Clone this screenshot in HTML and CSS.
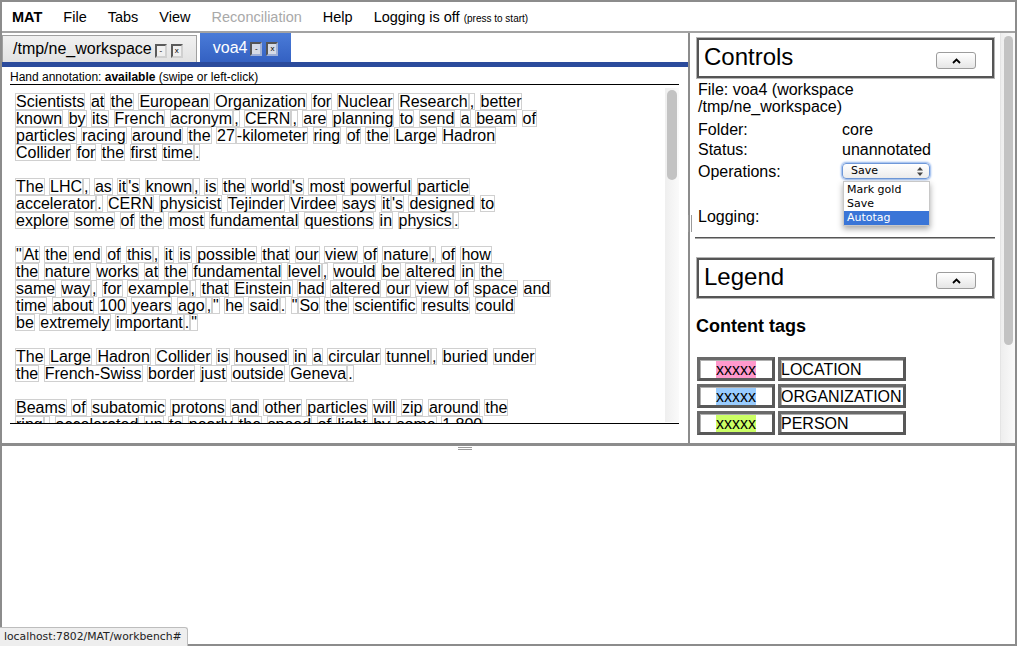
FILE: index.html
```html
<!DOCTYPE html>
<html>
<head>
<meta charset="utf-8">
<title>MAT Workbench</title>
<link rel="stylesheet" href="styles.css">
</head>
<body>
<div class="app">
  <div class="menubar">
    <span class="menu brand">MAT</span>
    <span class="menu">File</span>
    <span class="menu">Tabs</span>
    <span class="menu">View</span>
    <span class="menu disabled">Reconciliation</span>
    <span class="menu">Help</span>
    <span class="menu">Logging is off <small>(press to start)</small></span>
  </div>
  <div class="main">
    <div class="left">
      <div class="tabbar">
        <div class="tab">/tmp/ne_workspace<span class="tbtns"><span class="tbtn">-</span><span class="tbtn">x</span></span></div>
        <div class="tab active">voa4<span class="tbtns"><span class="tbtn">-</span><span class="tbtn">x</span></span></div>
      </div>
      <div class="tabline"></div>
      <div class="doc">
        <div class="annot">Hand annotation: <b>available</b> (swipe or left-click)</div>
        <div class="textwrap">
          <div class="text">
<span class="t">Scientists</span> <span class="t">at</span> <span class="t">the</span> <span class="t">European</span> <span class="t">Organization</span> <span class="t">for</span> <span class="t">Nuclear</span> <span class="t">Research</span><span class="t">,</span> <span class="t">better</span><br>
<span class="t">known</span> <span class="t">by</span> <span class="t">its</span> <span class="t">French</span> <span class="t">acronym</span><span class="t">,</span> <span class="t">CERN</span><span class="t">,</span> <span class="t">are</span> <span class="t">planning</span> <span class="t">to</span> <span class="t">send</span> <span class="t">a</span> <span class="t">beam</span> <span class="t">of</span><br>
<span class="t">particles</span> <span class="t">racing</span> <span class="t">around</span> <span class="t">the</span> <span class="t">27</span><span class="t">-kilometer</span> <span class="t">ring</span> <span class="t">of</span> <span class="t">the</span> <span class="t">Large</span> <span class="t">Hadron</span><br>
<span class="t">Collider</span> <span class="t">for</span> <span class="t">the</span> <span class="t">first</span> <span class="t">time</span><span class="t">.</span><br>
<br>
<span class="t">The</span> <span class="t">LHC</span><span class="t">,</span> <span class="t">as</span> <span class="t">it</span><span class="t">'s</span> <span class="t">known</span><span class="t">,</span> <span class="t">is</span> <span class="t">the</span> <span class="t">world</span><span class="t">'s</span> <span class="t">most</span> <span class="t">powerful</span> <span class="t">particle</span><br>
<span class="t">accelerator</span><span class="t">.</span> <span class="t">CERN</span> <span class="t">physicist</span> <span class="t">Tejinder</span> <span class="t">Virdee</span> <span class="t">says</span> <span class="t">it</span><span class="t">'s</span> <span class="t">designed</span> <span class="t">to</span><br>
<span class="t">explore</span> <span class="t">some</span> <span class="t">of</span> <span class="t">the</span> <span class="t">most</span> <span class="t">fundamental</span> <span class="t">questions</span> <span class="t">in</span> <span class="t">physics</span><span class="t">.</span><br>
<br>
<span class="t">"</span><span class="t">At</span> <span class="t">the</span> <span class="t">end</span> <span class="t">of</span> <span class="t">this</span><span class="t">,</span> <span class="t">it</span> <span class="t">is</span> <span class="t">possible</span> <span class="t">that</span> <span class="t">our</span> <span class="t">view</span> <span class="t">of</span> <span class="t">nature</span><span class="t">,</span> <span class="t">of</span> <span class="t">how</span><br>
<span class="t">the</span> <span class="t">nature</span> <span class="t">works</span> <span class="t">at</span> <span class="t">the</span> <span class="t">fundamental</span> <span class="t">level</span><span class="t">,</span> <span class="t">would</span> <span class="t">be</span> <span class="t">altered</span> <span class="t">in</span> <span class="t">the</span><br>
<span class="t">same</span> <span class="t">way</span><span class="t">,</span> <span class="t">for</span> <span class="t">example</span><span class="t">,</span> <span class="t">that</span> <span class="t">Einstein</span> <span class="t">had</span> <span class="t">altered</span> <span class="t">our</span> <span class="t">view</span> <span class="t">of</span> <span class="t">space</span> <span class="t">and</span><br>
<span class="t">time</span> <span class="t">about</span> <span class="t">100</span> <span class="t">years</span> <span class="t">ago</span><span class="t">,</span><span class="t">"</span> <span class="t">he</span> <span class="t">said</span><span class="t">.</span> <span class="t">"</span><span class="t">So</span> <span class="t">the</span> <span class="t">scientific</span> <span class="t">results</span> <span class="t">could</span><br>
<span class="t">be</span> <span class="t">extremely</span> <span class="t">important</span><span class="t">.</span><span class="t">"</span><br>
<br>
<span class="t">The</span> <span class="t">Large</span> <span class="t">Hadron</span> <span class="t">Collider</span> <span class="t">is</span> <span class="t">housed</span> <span class="t">in</span> <span class="t">a</span> <span class="t">circular</span> <span class="t">tunnel</span><span class="t">,</span> <span class="t">buried</span> <span class="t">under</span><br>
<span class="t">the</span> <span class="t">French-Swiss</span> <span class="t">border</span> <span class="t">just</span> <span class="t">outside</span> <span class="t">Geneva</span><span class="t">.</span><br>
<br>
<span class="t">Beams</span> <span class="t">of</span> <span class="t">subatomic</span> <span class="t">protons</span> <span class="t">and</span> <span class="t">other</span> <span class="t">particles</span> <span class="t">will</span> <span class="t">zip</span> <span class="t">around</span> <span class="t">the</span><br>
<span class="t">ring</span><span class="t">,</span> <span class="t">accelerated</span> <span class="t">up</span> <span class="t">to</span> <span class="t">nearly</span> <span class="t">the</span> <span class="t">speed</span> <span class="t">of</span> <span class="t">light</span> <span class="t">by</span> <span class="t">some</span> <span class="t">1,800</span>
          </div>
          <div class="vscroll"><div class="thumb"></div></div>
        </div>
      </div>
    </div>
    <div class="vsplit"><span class="vgrip"></span></div>
    <div class="right">
      <div class="rcontent">
        <div class="panel-head">
          <span>Controls</span>
          <span class="btn"><svg width="9" height="6" viewBox="0 0 9 6"><polyline points="1,5 4.5,1.5 8,5" fill="none" stroke="#000" stroke-width="1.8"/></svg></span>
        </div>
        <div class="info">
          <div class="file">File: voa4 (workspace<br>/tmp/ne_workspace)</div>
          <div class="kv">
            <span>Folder:</span><span>core</span>
            <span>Status:</span><span>unannotated</span>
            <span>Operations:</span>
            <span class="selwrap">
              <span class="select">Save<svg class="arrows" width="6" height="9" viewBox="0 0 6 9"><polygon points="0,3.5 3,0 6,3.5" fill="#444"/><polygon points="0,5.5 3,9 6,5.5" fill="#444"/></svg></span>
              <span class="dropdown">
                <span class="opt">Mark gold</span>
                <span class="opt">Save</span>
                <span class="opt sel">Autotag</span>
              </span>
            </span>
            <span class="logging">Logging:</span><span class="logging"></span>
          </div>
        </div>
        <div class="rule"></div>
        <div class="panel-head legend">
          <span>Legend</span>
          <span class="btn"><svg width="9" height="6" viewBox="0 0 9 6"><polyline points="1,5 4.5,1.5 8,5" fill="none" stroke="#000" stroke-width="1.8"/></svg></span>
        </div>
        <h3 class="ctags">Content tags</h3>
        <table class="legtable">
          <tr><td class="sample"><span class="loc">xxxxx</span></td><td class="label">LOCATION</td></tr>
          <tr><td class="sample"><span class="org">xxxxx</span></td><td class="label">ORGANIZATION</td></tr>
          <tr><td class="sample"><span class="per">xxxxx</span></td><td class="label">PERSON</td></tr>
        </table>
      </div>
      <div class="rscroll"><div class="thumb"></div></div>
    </div>
  </div>
  <div class="hsplit"><span class="hgrip"></span></div>
  <div class="bottom"></div>
  <div class="urltip">localhost:7802/MAT/workbench#</div>
</div>
</body>
</html>
```
FILE: styles.css
```css
* { box-sizing: border-box; }
html, body { margin: 0; padding: 0; }
body {
  width: 1017px;
  height: 646px;
  overflow: hidden;
  background: #fff;
  color: #000;
  font-family: "Liberation Sans", Arial, sans-serif;
}
.app {
  position: relative;
  width: 1017px;
  height: 646px;
  border: 2px solid #8c8c8c;
  display: flex;
  flex-direction: column;
}

/* menu */
.menubar {
  height: 31px;
  flex: none;
  border-bottom: 2px solid #a3a3a3;
  display: flex;
  align-items: center;
  gap: 21px;
  padding-left: 10px;
  font-size: 14.5px;
}
.brand { font-weight: bold; }
.menu.disabled { color: #a9a9a9; }
.menu small { font-size: 10px; }

/* main area */
.main { display: flex; height: 410px; flex: none; }
.left { width: 686px; display: flex; flex-direction: column; }
.tabbar {
  height: 29px;
  display: flex;
  align-items: flex-end;
  gap: 3px;
}
.tab {
  height: 27px;
  display: flex;
  align-items: center;
  padding: 0 13px 0 10px;
  font-size: 16px;
  background: linear-gradient(#f1f1f1, #e2e2e2);
  border: 1px solid #a0a0a0;
  border-bottom: none;
}
.tab.active {
  height: 29px;
  padding: 0 13px 0 13px;
  border: none;
  color: #fff;
  background: linear-gradient(#4a7bd8, #3461c2);
}
.tbtns { display: flex; gap: 4px; margin-left: 3px; margin-top: 3px; }
.tbtn {
  width: 12px;
  height: 14px;
  border: 2px solid;
  border-color: #5a5a5a #d0d0d0 #d0d0d0 #5a5a5a;
  background: #f0f0f0;
  color: #000;
  font-size: 8px;
  line-height: 10px;
  text-align: center;
}
.tab.active .tbtn { background: #d6dbe6; border-color: #555 #9fb0d6 #9fb0d6 #555; }
.tabline { height: 5px; background: #2b4b9c; }

.doc { margin: 0 9px 0 8px; display: flex; flex-direction: column; }
.annot {
  height: 18px;
  padding-top: 4px;
  font-size: 12px;
  line-height: 13px;
  border-bottom: 1px solid #000;
}
.textwrap {
  height: 339px;
  border-bottom: 1px solid #000;
  display: flex;
}
.text {
  flex: 1;
  overflow: hidden;
  padding: 8px 0 0 5px;
  font-size: 16px;
  line-height: 17px;
  white-space: nowrap;
}
.t {
  display: inline-block;
  height: 17px;
  line-height: 15px;
  border: 1px solid #d0d0d0;
}
.vscroll {
  width: 14px;
  margin: 3px 0 1px;
  padding: 2px 2px 0 2px;
  background: linear-gradient(to right, #efefef, #fafafa);
}
.vscroll .thumb {
  height: 90px;
  border-radius: 5px;
  background: #c3c3c3;
}

.vsplit { width: 2px; background: #8c8c8c; position: relative; }
.vgrip {
  position: absolute;
  left: 0;
  top: 182px;
  width: 4px;
  height: 17px;
  border-left: 1px solid #9a9a9a;
  border-right: 1px solid #9a9a9a;
}

.right { width: 325px; display: flex; }
.rcontent { flex: 1; padding: 5px 6px 0 7px; overflow: hidden; position: relative; }
.rscroll {
  width: 15px;
  padding: 3px 2px 0 3px;
  background: linear-gradient(to right, #eeeeee, #fafafa);
  border-left: 1px solid #e4e4e4;
}
.rscroll .thumb { height: 309px; border-radius: 5px; background: #c3c3c3; }

.panel-head {
  height: 40px;
  border: 2px solid #555;
  box-shadow: 0 0 0 1px #b4b4b4;
  display: flex;
  justify-content: space-between;
  align-items: flex-start;
  padding: 3px 16px 0 5px;
  font-size: 24px;
  line-height: 28px;
}
.btn {
  width: 40px;
  height: 17px;
  margin-top: 9px;
  border: 1px solid #9c9c9c;
  border-radius: 3px;
  background: linear-gradient(#ffffff, #e6e6e6);
  display: flex;
  align-items: center;
  justify-content: center;
}

.info { margin: 3px 0 0 1px; font-size: 16px; line-height: 17px; }
.kv {
  margin-top: 4px;
  display: grid;
  grid-template-columns: 144px 1fr;
  grid-template-rows: 20px 20px 24px 46px;
  align-items: center;
}
.logging { align-self: end; line-height: 24px; height: 24px; }
.selwrap { position: relative; height: 16px; }
.select {
  display: flex;
  align-items: center;
  justify-content: space-between;
  width: 88px;
  height: 16px;
  padding: 0 6px 0 8px;
  border: 1px solid #6f98d8;
  border-radius: 4px;
  box-shadow: 0 0 2px 1px #8fb3ec;
  background: linear-gradient(#ffffff, #ececec);
  font-family: "DejaVu Sans", sans-serif;
  font-size: 11px;
  line-height: 14px;
}
.dropdown {
  position: absolute;
  left: 1px;
  top: 18px;
  width: 87px;
  padding-top: 1px;
  background: #fff;
  border: 1px solid #c8c8c8;
  box-shadow: 0 3px 6px rgba(0,0,0,0.35);
  display: flex;
  flex-direction: column;
  font-family: "DejaVu Sans", sans-serif;
  font-size: 11px;
  line-height: 14px;
  z-index: 2;
}
.opt { padding-left: 3px; height: 14px; }
.opt.sel { background: #3a75d7; color: #fff; }

.rule {
  margin: 8px -1px 0 -2px;
  height: 2px;
  border-top: 1px solid #555;
  border-bottom: 1px solid #a8a8a8;
}
.legend { margin-top: 19px; }
.ctags {
  margin: 18px 0 0 -1px;
  font-size: 18px;
  line-height: 21px;
  font-weight: bold;
}
.legtable {
  margin: 17px 0 0 -3px;
  border-collapse: separate;
  border-spacing: 3px;
}
.legtable td {
  height: 24px;
  padding: 0;
  border: 3px solid #585858;
  border-top-color: #6a6a6a;
  border-left-color: #6a6a6a;
  box-shadow: inset 1px 1px 0 #b0b0b0;
  font-size: 16px;
  line-height: 17px;
}
.sample { width: 78px; text-align: center; }
.label { width: 128px; }
.loc { background: #ff99cc; }
.org { background: #99ccff; }
.per { background: #ccff66; }

.hsplit { height: 3px; flex: none; background: #8c8c8c; position: relative; }
.hgrip {
  position: absolute;
  left: 456px;
  top: 4px;
  width: 14px;
  height: 3px;
  border-top: 1px solid #9a9a9a;
  border-bottom: 1px solid #9a9a9a;
}
.bottom { flex: 1; background: #fff; }

.urltip {
  position: absolute;
  left: -2px;
  bottom: -2px;
  width: 188px;
  height: 19px;
  padding-left: 4px;
  background: #eeeeee;
  border-top: 1px solid #bdbdbd;
  border-right: 1px solid #bdbdbd;
  border-top-right-radius: 3px;
  font-family: "DejaVu Sans", sans-serif;
  font-size: 10.8px;
  line-height: 18px;
  color: #222;
  white-space: nowrap;
}
```
